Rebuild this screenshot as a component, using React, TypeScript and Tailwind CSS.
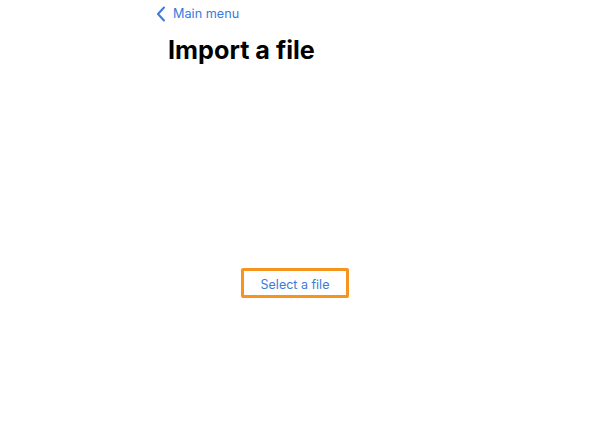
import React from "react";

export default function App() {
  return (
    <div
      className="min-h-screen w-full bg-white flex flex-col"
      style={{ fontFamily: "Inter, 'Noto Sans', sans-serif" }}
    >
      {/* === Header === */}
      <div className="pl-[156px] pt-[4px]">
        <button className="flex items-center h-[20px] text-[#3a7bdc]">
          <svg width="10" height="16" viewBox="0 0 10 16" fill="none">
            <path
              d="M8 1.5 L2 8 L8 14.5"
              stroke="currentColor"
              strokeWidth="2"
              strokeLinecap="round"
              strokeLinejoin="round"
            />
          </svg>
          <span className="ml-[7px] text-[12.7px] leading-[20px]">Main menu</span>
        </button>
        <h1 className="ml-[12px] mt-[11px] text-[25.2px] leading-[30px] font-bold text-black">
          Import a file
        </h1>
      </div>

      {/* === Select button === */}
      <div className="flex justify-center mt-[203px]">
        <button className="w-[108px] h-[30px] border-[3px] border-[#f7941d] rounded-[2px] flex items-center justify-center pt-[4px] text-[12.5px] text-[#3a7bdc] -ml-[2px]">
          Select a file
        </button>
      </div>
    </div>
  );
}
